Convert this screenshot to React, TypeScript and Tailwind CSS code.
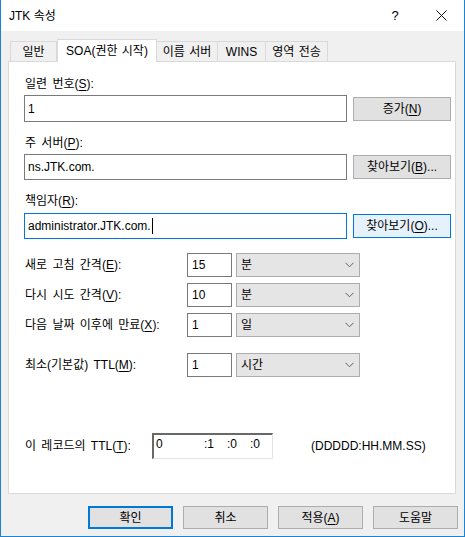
import React from "react";

const F = { fontFamily: '"Liberation Sans", "Noto Sans CJK KR", sans-serif' };

function U({ c }: { c: string }) {
  return <span className="underline underline-offset-2">{c}</span>;
}

function Btn({ children, w = "w-[98px]", h = "h-[24px]", cls = "" }: { children: React.ReactNode; w?: string; h?: string; cls?: string }) {
  return (
    <div className={`${w} ${h} flex items-center justify-center border border-[#adadad] bg-[#e1e1e1] text-[12px] leading-none ${cls}`}>
      {children}
    </div>
  );
}

function Chevron() {
  return (
    <svg width="9" height="6" viewBox="0 0 9 6" className="mr-[5px]">
      <path d="M0.5 0.8 L4.5 4.8 L8.5 0.8" stroke="#606060" strokeWidth="1" fill="none" />
    </svg>
  );
}

function Row({ label, value, unit, mt }: { label: React.ReactNode; value: string; unit: string; mt: string }) {
  return (
    <div className={`flex items-center ${mt}`}>
      <div className="w-[163px] text-[12px] leading-none pl-[1px] [word-spacing:2px]">{label}</div>
      <div className="w-[45px] h-[24px] border border-[#7a7a7a] bg-white flex items-center pl-[4px] text-[12px] leading-none">{value}</div>
      <div className="ml-[4px] w-[124px] h-[24px] border border-[#adadad] bg-[#e5e5e5] flex items-center justify-between pl-[4px] text-[12px] leading-none">
        <span>{unit}</span>
        <Chevron />
      </div>
    </div>
  );
}

export default function App() {
  return (
    <div style={F} className="w-[465px] h-[537px] bg-[#f0f0f0] border-x border-b border-[#1883d7] flex flex-col text-black">
      {/* title bar */}
      <div className="h-[31px] bg-white flex items-center shrink-0">
        <div className="pl-[8px] text-[12px] leading-none flex-1">JTK 속성</div>
        <div className="w-[46px] text-center text-[13px] leading-none">?</div>
        <div className="w-[46px] flex justify-center">
          <svg width="11" height="11" viewBox="0 0 11 11">
            <path d="M0.5 0.5 L10.5 10.5 M10.5 0.5 L0.5 10.5" stroke="#111" strokeWidth="1" />
          </svg>
        </div>
      </div>

      {/* tabs */}
      <div className="mt-[8px] pl-[9px] flex items-end h-[22px] text-[12px] leading-none">
        <div className="w-[47px] h-[20px] border border-b-0 border-[#d9d9d9] flex items-center justify-center">일반</div>
        <div className="relative z-10 w-[100px] h-[23px] mb-[-1px] border border-b-0 border-[#d9d9d9] bg-white flex items-center justify-center pb-[1px] [word-spacing:1px]">SOA(권한 시작)</div>
        <div className="w-[61px] h-[20px] border border-l-0 border-b-0 border-[#d9d9d9] flex items-center justify-center [word-spacing:1px]">이름 서버</div>
        <div className="w-[48px] h-[20px] border border-l-0 border-b-0 border-[#d9d9d9] flex items-center justify-center">WINS</div>
        <div className="w-[62px] h-[20px] border border-l-0 border-b-0 border-[#d9d9d9] flex items-center justify-center [word-spacing:1px]">영역 전송</div>
      </div>

      {/* panel */}
      <div className="ml-[7px] w-[448px] h-[433px] border border-[#d9d9d9] bg-white pl-[15px] pr-[3px] pt-[15px] text-[12px] leading-none">
        <div className="pl-[1px] h-[14px] flex items-center [word-spacing:2px]">일련 번호(<U c="S" />):</div>
        <div className="mt-[4px] flex items-center">
          <div className="w-[323px] h-[27px] border border-[#7a7a7a] flex items-center pl-[3px]">1</div>
          <Btn cls="ml-[6px]">증가(<U c="N" />)</Btn>
        </div>

        <div className="mt-[14px] pl-[1px] h-[14px] flex items-center [word-spacing:2px]">주 서버(<U c="P" />):</div>
        <div className="mt-[4px] flex items-center">
          <div className="w-[323px] h-[26px] border border-[#7a7a7a] flex items-center pl-[3px]">ns.JTK.com.</div>
          <Btn cls="ml-[6px]">찾아보기(<U c="B" />)...</Btn>
        </div>

        <div className="mt-[14px] pl-[1px] h-[14px] flex items-center">책임자(<U c="R" />):</div>
        <div className="mt-[5px] flex items-center">
          <div className="w-[323px] h-[26px] border border-[#0078d7] flex items-center pl-[3px]">
            administrator.JTK.com.<span className="inline-block w-[1px] h-[16px] bg-black ml-[1px]" />
          </div>
          <Btn cls="ml-[6px] !bg-[#e5f1fb] !border-[#0078d7]">찾아보기(<U c="O" />)...</Btn>
        </div>

        <Row mt="mt-[14px]" label={<>새로 고침 간격(<U c="E" />):</>} value="15" unit="분" />
        <Row mt="mt-[6px]" label={<>다시 시도 간격(<U c="V" />):</>} value="10" unit="분" />
        <Row mt="mt-[6px]" label={<>다음 날짜 이후에 만료(<U c="X" />):</>} value="1" unit="일" />
        <Row mt="mt-[16px]" label={<>최소(기본값) TTL(<U c="M" />):</>} value="1" unit="시간" />

        <div className="mt-[56px] flex items-center">
          <div className="w-[128px] pl-[1px] [word-spacing:2px]">이 레코드의 TTL(<U c="T" />):</div>
          <div className="w-[121px] h-[26px] border border-[#e3e3e3] border-t-[#696969] border-l-[#696969] border-t-2 border-l-2 flex items-start pt-[3px] pl-[2px]">
            <span className="w-[48px]">0</span>
            <span className="w-[23px]">:1</span>
            <span className="w-[23px]">:0</span>
            <span>:0</span>
          </div>
          <div className="ml-[38px]">(DDDDD:HH.MM.SS)</div>
        </div>
      </div>

      {/* bottom buttons */}
      <div className="mt-[12px] flex pl-[87px] gap-[10px]">
        <Btn w="w-[85px]" h="h-[23px]" cls="!border-2 !border-[#0078d7]">확인</Btn>
        <Btn w="w-[85px]" h="h-[23px]">취소</Btn>
        <Btn w="w-[85px]" h="h-[23px]">적용(<U c="A" />)</Btn>
        <Btn w="w-[85px]" h="h-[23px]">도움말</Btn>
      </div>
    </div>
  );
}
